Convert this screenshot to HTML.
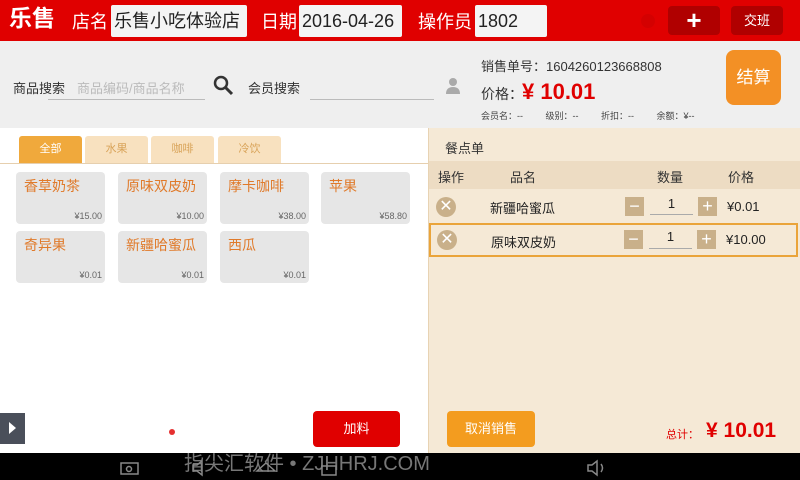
<!DOCTYPE html>
<html><head><meta charset="utf-8"><style>
*{margin:0;padding:0;box-sizing:border-box}
body{width:800px;height:480px;overflow:hidden;position:relative;font-family:"Liberation Sans","Noto Sans CJK SC",sans-serif;background:#fff}
.a{position:absolute}
.hdr{left:0;top:0;width:800px;height:41px;background:#e00000}
.inp{background:#f4f4f4;border-radius:2px;color:#222;font-size:18px;line-height:32px;padding-left:3px;top:5px;height:32px}
.lbl{color:#fff;font-size:18px;top:8px}
.card{background:#e6e6e6;border-radius:4px;width:89px;height:52px}
.card .n{position:absolute;left:8px;top:4px;color:#e07a2a;font-size:14px}
.card .p{position:absolute;right:3px;bottom:3px;color:#666;font-size:9px}
.tab{top:136px;height:27px;width:63px;background:#f8e1bf;color:#d9a45a;font-size:11px;text-align:center;line-height:27px;border-radius:3px 3px 0 0}
.x{width:20px;height:20px;border-radius:50%;background:#c9b08a;color:#fff;font-size:16px;line-height:20px;text-align:center}
.sq{width:19px;height:19px;background:#c9b08a;color:#fff;font-size:18px;line-height:18px;text-align:center}
</style></head><body>
<div class="a hdr"></div>
<div class="a" style="left:9px;top:3px;color:#fff;font-size:23px;font-weight:bold;line-height:30px">乐售</div>
<div class="a lbl" style="left:72px">店名</div>
<div class="a inp" style="left:111px;width:136px">乐售小吃体验店</div>
<div class="a lbl" style="left:261px">日期</div>
<div class="a inp" style="left:299px;width:103px">2016-04-26</div>
<div class="a lbl" style="left:418px">操作员</div>
<div class="a inp" style="left:475px;width:72px">1802</div>
<div class="a" style="left:641px;top:14px;width:14px;height:14px;border-radius:50%;background:#d40000"></div>
<div class="a" style="left:668px;top:6px;width:52px;height:29px;background:#b00000;border-radius:4px;color:#fff;font-size:26px;text-align:center;line-height:28px;font-weight:bold">+</div>
<div class="a" style="left:731px;top:6px;width:52px;height:29px;background:#b00000;border-radius:4px;color:#fff;font-size:13px;text-align:center;line-height:29px">交班</div>

<div class="a" style="left:0;top:41px;width:800px;height:87px;background:#efefef"></div>
<div class="a" style="left:13px;top:78px;font-size:13px;color:#333">商品搜索</div>
<div class="a" style="left:77px;top:78px;font-size:13px;color:#bbb">商品编码/商品名称</div>
<div class="a" style="left:48px;top:99px;width:157px;height:1px;background:#bbb"></div>
<svg class="a" style="left:213px;top:75px" width="22" height="22"><circle cx="8" cy="8" r="6" stroke="#333" stroke-width="2.5" fill="none"/><line x1="12" y1="12" x2="19" y2="19" stroke="#333" stroke-width="3"/></svg>
<div class="a" style="left:248px;top:78px;font-size:13px;color:#333">会员搜索</div>
<div class="a" style="left:310px;top:99px;width:124px;height:1px;background:#bbb"></div>
<svg class="a" style="left:445px;top:77px" width="16" height="18"><circle cx="8" cy="5" r="4" fill="#aaa"/><path d="M1 17 Q1 10 8 10 Q15 10 15 17Z" fill="#aaa"/></svg>
<div class="a" style="left:481px;top:56px;font-size:13px;color:#333">销售单号：1604260123668808</div>
<div class="a" style="left:481px;top:84px;font-size:14px;color:#333">价格：</div>
<div class="a" style="left:522px;top:79px;font-size:22px;color:#e00000;font-weight:bold">¥ 10.01</div>
<div class="a" style="left:481px;top:109px;font-size:9px;color:#444;word-spacing:20px">会员名：-- 级别：-- 折扣：-- 余额：¥--</div>
<div class="a" style="left:726px;top:50px;width:55px;height:55px;background:#f39025;border-radius:8px;color:#fff;font-size:17px;text-align:center;line-height:55px">结算</div>

<div class="a tab" style="left:19px;background:#f0a93c;color:#fff">全部</div>
<div class="a tab" style="left:85px">水果</div>
<div class="a tab" style="left:151px">咖啡</div>
<div class="a tab" style="left:218px">冷饮</div>
<div class="a" style="left:0;top:163px;width:428px;height:1px;background:#e6cfae"></div>
<div class="a card" style="left:16px;top:172px"><span class="n">香草奶茶</span><span class="p">¥15.00</span></div>
<div class="a card" style="left:118px;top:172px"><span class="n">原味双皮奶</span><span class="p">¥10.00</span></div>
<div class="a card" style="left:220px;top:172px"><span class="n">摩卡咖啡</span><span class="p">¥38.00</span></div>
<div class="a card" style="left:321px;top:172px"><span class="n">苹果</span><span class="p">¥58.80</span></div>
<div class="a card" style="left:16px;top:231px"><span class="n">奇异果</span><span class="p">¥0.01</span></div>
<div class="a card" style="left:118px;top:231px"><span class="n">新疆哈蜜瓜</span><span class="p">¥0.01</span></div>
<div class="a card" style="left:220px;top:231px"><span class="n">西瓜</span><span class="p">¥0.01</span></div>
<div class="a" style="left:0;top:413px;width:25px;height:31px;background:#4a4f5a"></div>
<div class="a" style="left:9px;top:422px;width:0;height:0;border-left:7px solid #fff;border-top:6px solid transparent;border-bottom:6px solid transparent"></div>
<div class="a" style="left:169px;top:429px;width:6px;height:6px;border-radius:50%;background:#e53030"></div>
<div class="a" style="left:313px;top:411px;width:87px;height:36px;background:#e00000;border-radius:4px;color:#fff;font-size:13px;text-align:center;line-height:36px">加料</div>

<div class="a" style="left:428px;top:128px;width:372px;height:325px;background:#f5e9d6;border-left:1px solid #e8d3b3"></div>
<div class="a" style="left:445px;top:138px;font-size:13px;color:#333">餐点单</div>
<div class="a" style="left:429px;top:161px;width:371px;height:28px;background:#eddcc3"></div>
<div class="a" style="left:438px;top:167px;font-size:13px;color:#333">操作</div>
<div class="a" style="left:510px;top:167px;font-size:13px;color:#333">品名</div>
<div class="a" style="left:657px;top:167px;font-size:13px;color:#333">数量</div>
<div class="a" style="left:728px;top:167px;font-size:13px;color:#333">价格</div>

<div class="a x" style="left:436px;top:197px">✕</div>
<div class="a" style="left:490px;top:198px;font-size:13px;color:#222">新疆哈蜜瓜</div>
<div class="a sq" style="left:625px;top:197px">−</div>
<div class="a" style="left:650px;top:196px;width:43px;height:19px;border-bottom:1px solid #aaa;font-size:13px;text-align:center;color:#222">1</div>
<div class="a sq" style="left:698px;top:197px">+</div>
<div class="a" style="left:727px;top:199px;font-size:13px;color:#222">¥0.01</div>

<div class="a" style="left:429px;top:223px;width:369px;height:34px;border:2px solid #eaa43a"></div>
<div class="a x" style="left:437px;top:230px">✕</div>
<div class="a" style="left:491px;top:232px;font-size:13px;color:#222">原味双皮奶</div>
<div class="a sq" style="left:624px;top:230px">−</div>
<div class="a" style="left:649px;top:229px;width:43px;height:20px;border-bottom:1px solid #aaa;font-size:13px;text-align:center;color:#222">1</div>
<div class="a sq" style="left:697px;top:230px">+</div>
<div class="a" style="left:726px;top:232px;font-size:13px;color:#222">¥10.00</div>

<div class="a" style="left:447px;top:411px;width:88px;height:36px;background:#f39c1f;border-radius:4px;color:#fff;font-size:13px;text-align:center;line-height:36px">取消销售</div>
<div class="a" style="left:666px;top:426px;font-size:11px;color:#e00000">总计：</div>
<div class="a" style="left:706px;top:419px;font-size:21px;color:#e00000;font-weight:bold">¥ 10.01</div>

<div class="a" style="left:0;top:453px;width:800px;height:27px;background:#000"></div>
<div class="a" style="left:184px;top:447px;font-size:20px;color:#777;letter-spacing:0px;white-space:nowrap">指尖汇软件 • ZJHHRJ.COM</div>
<svg class="a" style="left:0;top:453px" width="800" height="27" fill="none" stroke="#888" stroke-width="1.5">
<rect x="121" y="10" width="17" height="11"/><circle cx="129" cy="16" r="2.5"/>
<path d="M193 12h4l5-4v14l-5-4h-4z"/>
<path d="M588 12h4l5-4v14l-5-4h-4zM601 11q3 4 0 8"/>
<path d="M257 18l9-8 9 8zM322 13h14v9h-14z"/>
</svg>
</body></html>
